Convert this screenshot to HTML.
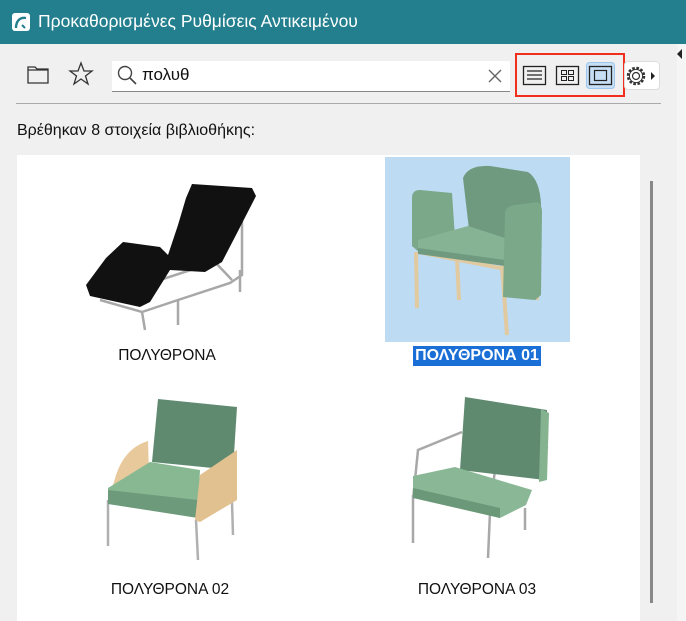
<!DOCTYPE html>
<html><head><meta charset="utf-8"><style>
*{margin:0;padding:0;box-sizing:border-box}
body{width:686px;height:621px;overflow:hidden;background:#f0f0f0;font-family:"Liberation Sans","DejaVu Sans",sans-serif;position:relative}
.title{position:absolute;left:0;top:0;width:686px;height:44px;background:#237f8e;color:#fff;font-size:17.5px}
.abs{position:absolute}
.lbl{position:absolute;font-size:15.5px;color:#111;text-align:center}
</style></head><body>
<div class="title">
 <div class="abs" style="left:12px;top:13px;width:18px;height:18px;background:#fff;border-radius:3px"></div>
 <svg class="abs" style="left:12px;top:13px" width="18" height="18"><path d="M4 15 C4 8 8 4 14 5" stroke="#237f8e" stroke-width="2.4" fill="none"/><path d="M10 12 L13 15" stroke="#237f8e" stroke-width="2"/></svg>
 <div class="abs" style="left:38px;top:11px">Προκαθορισμένες Ρυθμίσεις Αντικειμένου</div>
</div>
<div class="abs" style="left:677px;top:44px;width:9px;height:577px;background:#f5f5f5"></div>
<svg class="abs" style="left:676px;top:48px" width="8" height="12"><path d="M6 1 L1 6 L6 11Z" fill="#222"/></svg>
<svg class="abs" style="left:26px;top:62px" width="26" height="24"><path d="M2 5 H9 L11 7 H22 V21 H2Z M2 8 H22" fill="none" stroke="#333" stroke-width="1.3"/></svg>
<svg class="abs" style="left:68px;top:61px" width="26" height="26"><path d="M13 2 L16 10 L24 10 L17.5 15 L20 23 L13 18 L6 23 L8.5 15 L2 10 L10 10Z" fill="none" stroke="#333" stroke-width="1.3"/></svg>
<div class="abs" style="left:112px;top:61px;width:398px;height:31px;background:#fff;border-bottom:1px solid #888"></div>
<svg class="abs" style="left:116px;top:64px" width="22" height="22"><circle cx="9" cy="9" r="6.5" fill="none" stroke="#444" stroke-width="1.4"/><path d="M14 14 L20 20" stroke="#444" stroke-width="1.6"/></svg>
<div class="abs" style="left:142px;top:65px;font-size:17px;color:#111">πολυθ</div>
<svg class="abs" style="left:486px;top:67px" width="18" height="18"><path d="M3 3 L15 15 M15 3 L3 15" stroke="#666" stroke-width="1.4"/></svg>
<div class="abs" style="left:515px;top:53px;width:110px;height:44px;border:2px solid #f0301c"></div>
<svg class="abs" style="left:520px;top:62px" width="110" height="28">
 <rect x="3.5" y="4.5" width="22" height="18" fill="none" stroke="#222" stroke-width="1.3"/>
 <path d="M7 9 H22 M7 13 H22 M7 17 H22" stroke="#222" stroke-width="1.2"/>
 <rect x="36.5" y="4.5" width="22" height="18" fill="none" stroke="#222" stroke-width="1.3"/>
 <rect x="41.5" y="8.5" width="5" height="4" fill="none" stroke="#222"/><rect x="48.5" y="8.5" width="5" height="4" fill="none" stroke="#222"/>
 <rect x="41.5" y="14.5" width="5" height="4" fill="none" stroke="#222"/><rect x="48.5" y="14.5" width="5" height="4" fill="none" stroke="#222"/>
 <rect x="66.5" y="0.5" width="28" height="26" rx="3" fill="#c7def5" stroke="#9cc6ee"/>
 <rect x="69.5" y="4.5" width="22" height="18" fill="none" stroke="#222" stroke-width="1.3"/>
 <rect x="74.5" y="8.5" width="12" height="10" fill="none" stroke="#222" stroke-width="1.2"/>
</svg>
<div class="abs" style="left:624px;top:61px;width:36px;height:29px;background:#fff;border:1px solid #ddd;border-radius:4px"></div>
<svg class="abs" style="left:624px;top:63px" width="36" height="26"><circle cx="12" cy="13" r="8" fill="none" stroke="#333" stroke-width="2.5" stroke-dasharray="2.6 1.6"/><circle cx="12" cy="13" r="6.6" fill="#fff" stroke="#333" stroke-width="1"/><circle cx="12" cy="13" r="3.5" fill="none" stroke="#333" stroke-width="1.2"/><path d="M27 9 L31 13 L27 17Z" fill="#222"/></svg>
<div class="abs" style="left:16px;top:103px;width:645px;height:1px;background:#aaa"></div>
<div class="abs" style="left:17px;top:122px;font-size:16px;color:#111">Βρέθηκαν 8 στοιχεία βιβλιοθήκης:</div>
<div class="abs" style="left:17px;top:155px;width:623px;height:466px;background:#fff"></div>
<div class="abs" style="left:385px;top:157px;width:185px;height:185px;background:#bddbf2"></div>
<div class="abs" style="left:650px;top:181px;width:3px;height:422px;background:#888"></div>
<svg class="abs" style="left:0;top:0" width="686" height="621">
 <g stroke="#a8a8a8" stroke-width="2.5" fill="none">
  <path d="M100 300 L142 312 L178 300 L230 283 L242 275 L242 212 L252 195"/>
  <path d="M142 312 L145 330 M178 300 L178 325 M240 270 L240 292 M160 280 L215 262 L232 280"/>
  <path d="M150 300 L160 268 L182 266"/>
 </g>
 <path d="M192 184 L252 188 L256 196 L236 235 L222 262 L205 272 L170 270 L150 302 L140 307 L90 296 L86 285 L106 258 L123 242 L160 247 L168 255 L178 225 L186 198Z" fill="#111"/>
 <g stroke="#e1c9a0" stroke-width="4" fill="none"><path d="M416 252 L417 308 M502 266 L507 335 M457 258 L459 300 M535 255 L537 300"/><path d="M418 252 L500 268 L540 255"/></g>
 <path d="M463 178 Q468 165 490 166 L528 172 Q540 180 541 205 L535 255 L470 238Z" fill="#6f9a80"/>
 <path d="M412 198 Q412 190 420 190 L452 193 L455 238 L420 253 L412 246Z" fill="#7aa888"/>
 <path d="M418 240 L468 226 L505 238 L505 263 L418 251Z" fill="#86b393"/>
 <path d="M418 248 L505 260 L505 266 L418 254Z" fill="#6f9a80"/>
 <path d="M505 213 Q506 206 515 205 L538 202 Q542 205 542 212 L541 295 L535 300 L503 297Z" fill="#7aa888"/>
 <g stroke="#b0b0b0" stroke-width="2.5" fill="none"><path d="M108 500 L108 546 M196 520 L198 560 M232 502 L233 535"/></g>
 <path d="M158 399 L237 407 L233 470 L152 462Z" fill="#5f8a70"/>
 <path d="M148 441 Q125 448 116 475 L110 495 L150 505 Z" fill="#e8c99b"/>
 <path d="M108 488 L150 462 L200 470 L198 512 L108 500Z" fill="#88b892"/>
 <path d="M108 490 L198 500 L198 518 L108 504Z" fill="#6c9a7b"/>
 <path d="M200 475 L237 450 L237 500 L200 522 L195 520Z" fill="#e2c191"/>
 <g stroke="#a8a8a8" stroke-width="2.5" fill="none"><path d="M413 495 L413 543 M490 512 L488 558 M525 508 L525 530 M413 500 L418 450 L462 432 M490 510 L495 470 L548 447"/></g>
 <path d="M465 397 L547 410 L545 480 L460 470Z" fill="#5f8a70"/>
 <path d="M541 409 L549 413 L547 480 L539 482Z" fill="#85b390"/>
 <path d="M413 476 L455 467 L532 490 L526 505 L500 518 L413 497Z" fill="#8ab896"/>
 <path d="M413 488 L500 508 L500 518 L413 498Z" fill="#6a9878"/>
</svg>
<div class="lbl" style="left:87px;top:347px;width:160px">ΠΟΛΥΘΡΟΝΑ</div>
<div class="abs" style="left:413px;top:346px;width:128px;height:20px;background:#1a6fd6;color:#fff;font-weight:bold;font-size:16px;text-align:center;line-height:20px;white-space:nowrap">ΠΟΛΥΘΡΟΝΑ 01</div>
<div class="lbl" style="left:90px;top:581px;width:160px">ΠΟΛΥΘΡΟΝΑ 02</div>
<div class="lbl" style="left:397px;top:581px;width:160px">ΠΟΛΥΘΡΟΝΑ 03</div>
</body></html>
